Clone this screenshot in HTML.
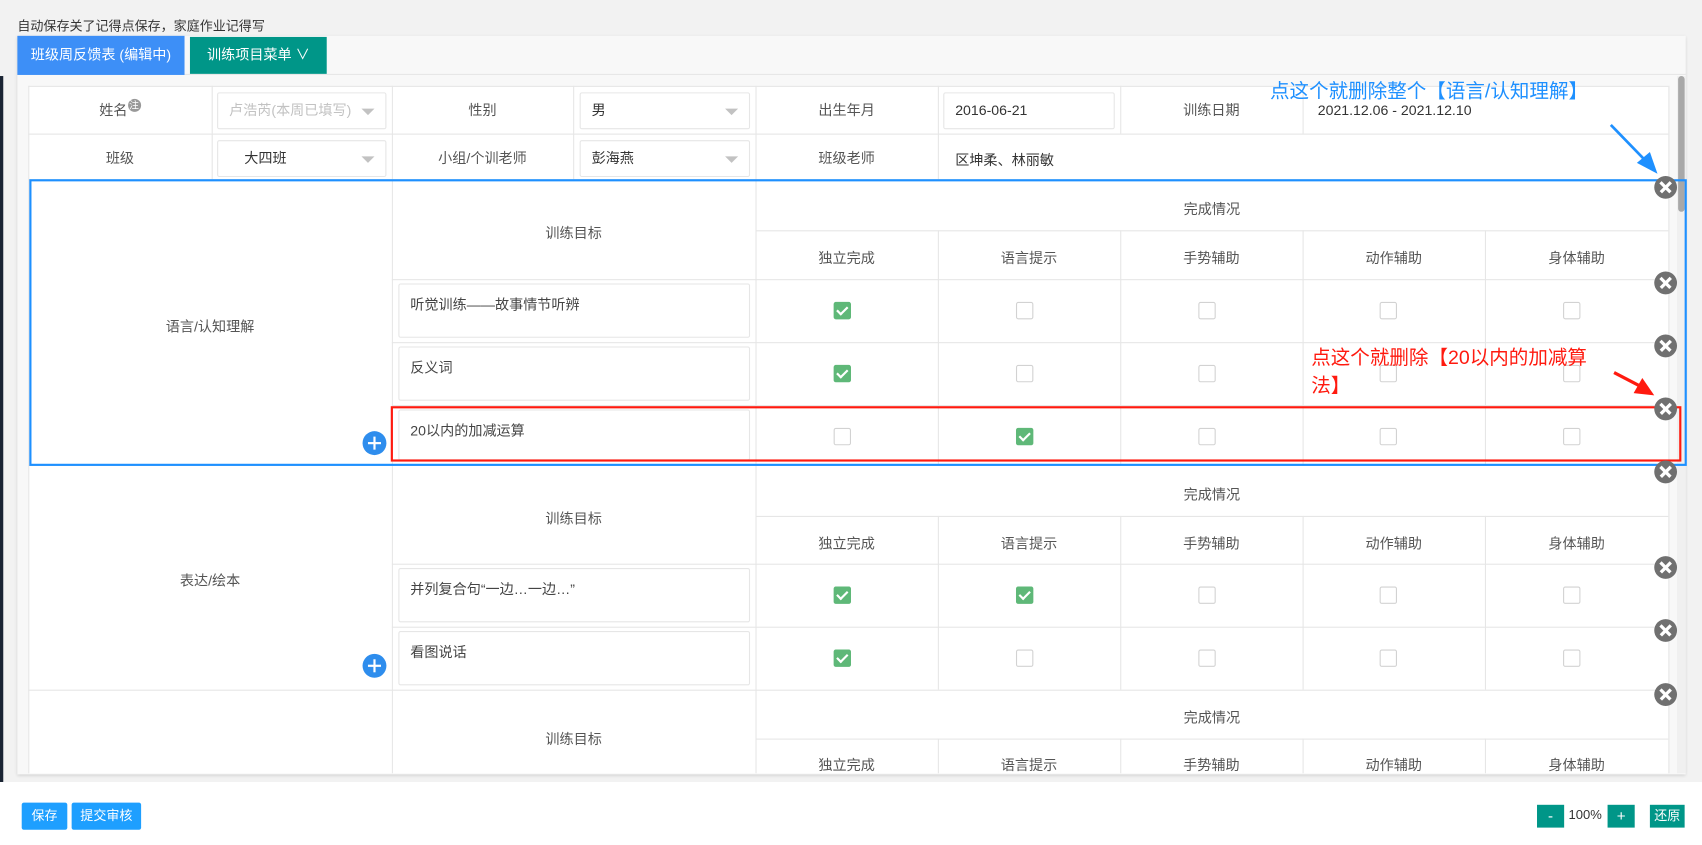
<!DOCTYPE html>
<html><head><meta charset="utf-8"><style>
*{margin:0;padding:0;box-sizing:border-box}
html,body{width:1702px;height:845px;overflow:hidden;background:#fff}
#w{position:absolute;left:0;top:0;width:1568px;height:778px;transform:scale(1.08546,1.0861);transform-origin:0 0;font-family:"Liberation Sans","Noto Sans CJK SC",sans-serif;font-size:13px;color:#333}
.a{position:absolute}
.h{position:absolute;height:1px;background:#e6e6e6}
.v{position:absolute;width:1px;background:#e6e6e6}
.t{position:absolute;text-align:center;color:#555}
.sel{position:absolute;border:1px solid #e6e6e6;border-radius:2px;background:#fff;padding-left:10px;line-height:32px;height:34px}
.sel:after{content:"";position:absolute;right:10px;top:14px;border:6px solid transparent;border-top:6px solid #c2c2c2}
.sel.n:after{display:none}
.in{position:absolute;left:367px;width:324px;height:50px;border:1px solid #e6e6e6;border-radius:2px;padding:8px 10px;color:#444;background:#fff}
.cb{position:absolute;width:16px;height:16px;border:1px solid #d2d2d2;border-radius:2px;background:#fff}
.cb.on{background:#5fb878;border-color:#5fb878}
.cb.on:after{content:"";position:absolute;left:4px;top:1px;width:4px;height:8px;border:solid #fff;border-width:0 2px 2px 0;transform:rotate(45deg)}
.x{position:absolute;width:21px;height:21px;border-radius:50%;background:#707070}
.x:before,.x:after{content:"";position:absolute;left:4px;top:9px;width:13px;height:2.5px;background:#fff;transform:rotate(45deg)}
.x:after{transform:rotate(-45deg)}
.p{position:absolute;width:22px;height:22px;border-radius:50%;background:#2e8ded}
.p:before{content:"";position:absolute;left:5px;top:10px;width:12px;height:2px;background:#fff}
.p:after{content:"";position:absolute;left:10px;top:5px;width:2px;height:12px;background:#fff}
.btn{position:absolute;color:#fff;font-size:12px;text-align:center}
</style></head><body><div id="w">
<div class="a" style="left:0;top:0;width:1568px;height:720px;background:#f2f2f2"></div>
<div class="a" style="left:0;top:70px;width:3px;height:650px;background:#1a2433"></div>
<div class="a" style="left:16px;top:15px;font-size:12px;color:#333">自动保存关了记得点保存，家庭作业记得写</div>
<div class="a" style="left:16px;top:33px;width:1537px;height:680px;background:#f8f8f8;box-shadow:0 1px 3px rgba(0,0,0,.15)"></div>
<div class="a" style="left:16px;top:33px;width:1537px;height:36px;border-bottom:1px solid #e6e6e6"></div>
<div class="btn" style="left:16px;top:33px;width:154px;height:36px;line-height:36px;background:#3d8ff7;font-size:13px">班级周反馈表 (编辑中)</div>
<div class="btn" style="left:175px;top:34px;width:126px;height:34px;line-height:34px;background:#009688;font-size:13px">训练项目菜单 ∨</div>
<div class="a" style="left:26px;top:79px;width:1511px;height:633px;background:#fff"></div>
<div class="a" style="left:1545px;top:70px;width:8px;height:642px;background:#f0f0f0"></div>
<div class="a" style="left:1546px;top:70px;width:6px;height:125px;background:#a8a8a8;border-radius:3px"></div>

<div class="h" style="left:26px;top:79px;width:1511px"></div>
<div class="h" style="left:26px;top:123px;width:1511px"></div>
<div class="h" style="left:26px;top:165px;width:1511px"></div>
<div class="h" style="left:696px;top:212px;width:841px"></div>
<div class="h" style="left:361px;top:257px;width:1176px"></div>
<div class="h" style="left:361px;top:315px;width:1176px"></div>
<div class="h" style="left:361px;top:373px;width:1176px"></div>
<div class="h" style="left:26px;top:428px;width:1511px"></div>
<div class="h" style="left:696px;top:475px;width:841px"></div>
<div class="h" style="left:361px;top:519px;width:1176px"></div>
<div class="h" style="left:361px;top:577px;width:1176px"></div>
<div class="h" style="left:26px;top:635px;width:1511px"></div>
<div class="h" style="left:696px;top:680px;width:841px"></div>
<div class="v" style="left:26px;top:79px;height:633px"></div>
<div class="v" style="left:1537px;top:79px;height:633px"></div>
<div class="v" style="left:195px;top:79px;height:86px"></div>
<div class="v" style="left:361px;top:79px;height:633px"></div>
<div class="v" style="left:528px;top:79px;height:86px"></div>
<div class="v" style="left:696px;top:79px;height:633px"></div>
<div class="v" style="left:864px;top:79px;height:86px"></div>
<div class="v" style="left:1032px;top:79px;height:44px"></div>
<div class="v" style="left:1200px;top:79px;height:44px"></div>
<div class="v" style="left:864px;top:212px;height:216px"></div>
<div class="v" style="left:1032px;top:212px;height:216px"></div>
<div class="v" style="left:1200px;top:212px;height:216px"></div>
<div class="v" style="left:1368px;top:212px;height:216px"></div>
<div class="v" style="left:864px;top:475px;height:160px"></div>
<div class="v" style="left:1032px;top:475px;height:160px"></div>
<div class="v" style="left:1200px;top:475px;height:160px"></div>
<div class="v" style="left:1368px;top:475px;height:160px"></div>
<div class="v" style="left:864px;top:680px;height:32px"></div>
<div class="v" style="left:1032px;top:680px;height:32px"></div>
<div class="v" style="left:1200px;top:680px;height:32px"></div>
<div class="v" style="left:1368px;top:680px;height:32px"></div>

<div class="t" style="left:26px;top:91px;width:169px">姓名<span style="display:inline-block;width:12px;height:12px;border-radius:50%;background:#999;color:#fff;font-size:9px;line-height:12px;vertical-align:top">注</span></div>
<div class="sel" style="left:200px;top:85px;width:156px;color:#c2c2c2">卢浩芮(本周已填写)</div>
<div class="t" style="left:361px;top:91px;width:167px">性别</div>
<div class="sel" style="left:534px;top:85px;width:157px">男</div>
<div class="t" style="left:696px;top:91px;width:168px">出生年月</div>
<div class="sel n" style="left:869px;top:85px;width:158px">2016-06-21</div>
<div class="t" style="left:1032px;top:91px;width:168px">训练日期</div>
<div class="a" style="left:1214px;top:94px;color:#333">2021.12.06 - 2021.12.10</div>
<div class="t" style="left:26px;top:135px;width:169px">班级</div>
<div class="sel" style="left:200px;top:129px;width:156px;padding-left:24px">大四班</div>
<div class="t" style="left:361px;top:135px;width:167px">小组/个训老师</div>
<div class="sel" style="left:534px;top:129px;width:157px">彭海燕</div>
<div class="t" style="left:696px;top:135px;width:168px">班级老师</div>
<div class="a" style="left:880px;top:137px">区坤柔、林丽敏</div>

<div class="t" style="left:26px;top:290px;width:335px">语言/认知理解</div>
<div class="t" style="left:361px;top:204px;width:335px">训练目标</div>
<div class="t" style="left:696px;top:182px;width:841px">完成情况</div>
<div class="t" style="left:696px;top:227px;width:168px">独立完成</div>
<div class="t" style="left:864px;top:227px;width:168px">语言提示</div>
<div class="t" style="left:1032px;top:227px;width:168px">手势辅助</div>
<div class="t" style="left:1200px;top:227px;width:168px">动作辅助</div>
<div class="t" style="left:1368px;top:227px;width:169px">身体辅助</div>
<div class="in" style="top:261px">听觉训练——故事情节听辨</div>
<div class="in" style="top:319px">反义词</div>
<div class="in" style="top:377px;height:47px">20以内的加减运算</div>
<div class="p" style="left:334px;top:397px"></div>

<div class="t" style="left:26px;top:524px;width:335px">表达/绘本</div>
<div class="t" style="left:361px;top:467px;width:335px">训练目标</div>
<div class="t" style="left:696px;top:445px;width:841px">完成情况</div>
<div class="t" style="left:696px;top:490px;width:168px">独立完成</div>
<div class="t" style="left:864px;top:490px;width:168px">语言提示</div>
<div class="t" style="left:1032px;top:490px;width:168px">手势辅助</div>
<div class="t" style="left:1200px;top:490px;width:168px">动作辅助</div>
<div class="t" style="left:1368px;top:490px;width:169px">身体辅助</div>
<div class="in" style="top:523px">并列复合句“一边…一边…”</div>
<div class="in" style="top:581px">看图说话</div>
<div class="p" style="left:334px;top:602px"></div>

<div class="t" style="left:361px;top:670px;width:335px">训练目标</div>
<div class="t" style="left:696px;top:650px;width:841px">完成情况</div>
<div class="t" style="left:696px;top:694px;width:168px">独立完成</div>
<div class="t" style="left:864px;top:694px;width:168px">语言提示</div>
<div class="t" style="left:1032px;top:694px;width:168px">手势辅助</div>
<div class="t" style="left:1200px;top:694px;width:168px">动作辅助</div>
<div class="t" style="left:1368px;top:694px;width:169px">身体辅助</div>

<div class="cb on" style="left:768px;top:278px"></div><div class="cb" style="left:936px;top:278px"></div><div class="cb" style="left:1104px;top:278px"></div><div class="cb" style="left:1271px;top:278px"></div><div class="cb" style="left:1440px;top:278px"></div>
<div class="cb on" style="left:768px;top:336px"></div><div class="cb" style="left:936px;top:336px"></div><div class="cb" style="left:1104px;top:336px"></div><div class="cb" style="left:1271px;top:336px"></div><div class="cb" style="left:1440px;top:336px"></div>
<div class="cb" style="left:768px;top:394px"></div><div class="cb on" style="left:936px;top:394px"></div><div class="cb" style="left:1104px;top:394px"></div><div class="cb" style="left:1271px;top:394px"></div><div class="cb" style="left:1440px;top:394px"></div>
<div class="cb on" style="left:768px;top:540px"></div><div class="cb on" style="left:936px;top:540px"></div><div class="cb" style="left:1104px;top:540px"></div><div class="cb" style="left:1271px;top:540px"></div><div class="cb" style="left:1440px;top:540px"></div>
<div class="cb on" style="left:768px;top:598px"></div><div class="cb" style="left:936px;top:598px"></div><div class="cb" style="left:1104px;top:598px"></div><div class="cb" style="left:1271px;top:598px"></div><div class="cb" style="left:1440px;top:598px"></div>

<div class="a" style="left:27px;top:165px;width:1527px;height:264px;border:2px solid #1e90ff"></div>
<div class="a" style="left:360px;top:374px;width:1189px;height:51px;border:2px solid #ff1a0f"></div>

<div class="x" style="left:1524px;top:162px"></div>
<div class="x" style="left:1524px;top:250px"></div>
<div class="x" style="left:1524px;top:308px"></div>
<div class="x" style="left:1524px;top:366px"></div>
<div class="x" style="left:1524px;top:424px"></div>
<div class="x" style="left:1524px;top:512px"></div>
<div class="x" style="left:1524px;top:570px"></div>
<div class="x" style="left:1524px;top:629px"></div>

<div class="a" style="left:1170px;top:70px;font-size:18px;color:#1e90ff;white-space:nowrap">点这个就删除整个【语言/认知理解】</div>
<div class="a" style="left:1208px;top:316px;font-size:18px;color:#ff1a0f;line-height:26px;white-space:nowrap">点这个就删除【20以内的加减算<br>法】</div>
<svg class="a" style="left:0;top:0" width="1568" height="778">
<line x1="1484" y1="115" x2="1518" y2="150" stroke="#1e90ff" stroke-width="2.5"/>
<polygon points="1527,160 1508,150 1520,140" fill="#1e90ff"/>
<line x1="1487" y1="343" x2="1510" y2="355" stroke="#ff1a0f" stroke-width="3"/>
<polygon points="1524,364 1505,362 1513,348" fill="#ff1a0f"/>
</svg>

<div class="btn" style="left:20px;top:739px;width:42px;height:25px;line-height:25px;background:#1e9fff;border-radius:2px">保存</div>
<div class="btn" style="left:66px;top:739px;width:64px;height:25px;line-height:25px;background:#1e9fff;border-radius:2px">提交审核</div>
<div class="btn" style="left:1416px;top:741px;width:25px;height:21px;line-height:21px;background:#009688;font-size:14px">-</div>
<div class="a" style="left:1445px;top:743px;font-size:12px;color:#333">100%</div>
<div class="btn" style="left:1481px;top:741px;width:25px;height:21px;line-height:21px;background:#009688;font-size:14px">+</div>
<div class="btn" style="left:1520px;top:741px;width:32px;height:21px;line-height:21px;background:#009688">还原</div>
</div></body></html>
